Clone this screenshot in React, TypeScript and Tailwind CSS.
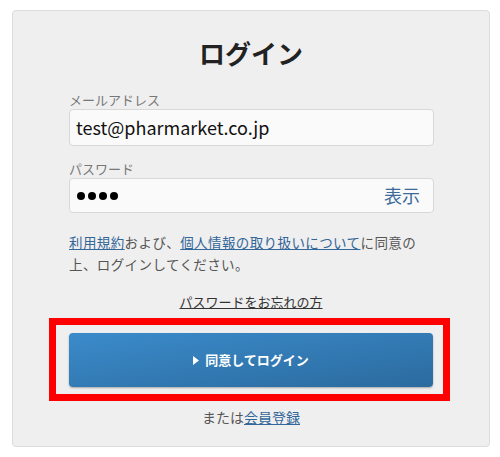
export default function App() {
  return (
    <div className="w-[500px] h-[457px] bg-white pt-[10px] pl-[12px] font-['Noto_Sans_CJK_JP',sans-serif]">
      <div className="w-[478px] h-[437px] bg-[#efefef] border border-[#dcdcdc] rounded-[4px] flex flex-col">
        {/* Title */}
        <h1 className="mt-[25px] text-center text-[26px] leading-[34px] font-bold text-[#222]">ログイン</h1>

        <div className="mt-[22px] pl-[56px] w-[421px]">
          <div className="text-[13px] leading-[16px] text-[#777]">メールアドレス</div>
          <div className="mt-[1px] h-[37px] bg-[#fafafa] border border-[#d8d8d8] rounded-[4px] flex items-center px-[6px] text-[18px] text-[#111]">
            test@pharmarket.co.jp
          </div>

          <div className="mt-[15px] text-[13px] leading-[16px] text-[#777]">パスワード</div>
          <div className="mt-[1px] h-[35px] bg-[#fafafa] border border-[#d8d8d8] rounded-[4px] flex items-center justify-between pl-[7px] pr-[13px]">
            <span className="flex gap-[3px]">
              <span className="w-[8px] h-[8px] rounded-full bg-black" />
              <span className="w-[8px] h-[8px] rounded-full bg-black" />
              <span className="w-[8px] h-[8px] rounded-full bg-black" />
              <span className="w-[8px] h-[8px] rounded-full bg-black" />
            </span>
            <span className="text-[18px] text-[#3c6a9b]">表示</span>
          </div>

          <p className="mt-[18px] text-[13.5px] tracking-[0.4px] leading-[22px] text-[#555]">
            <a className="underline text-[#336699]">利用規約</a>および、<a className="underline text-[#336699]">個人情報の取り扱いについて</a>に同意の
            <br />
            上、ログインしてください。
          </p>
        </div>

        <div className="mt-[18px] text-center text-[13px] leading-[18px]">
          <a className="underline text-[#333]">パスワードをお忘れの方</a>
        </div>

        {/* Button with highlight frame */}
        <div className="mt-[7px] ml-[36px] w-[401px] border-[7px] border-[#ff0000] px-[13px] pt-[8px] pb-[7px]">
          <button className="w-[364px] h-[54px] rounded-[4px] bg-gradient-to-br from-[#3b8bcb] to-[#2b6b9f] shadow-[0_1px_2px_rgba(0,0,0,0.3)] text-white text-[13px] font-bold flex items-center justify-center gap-[6px]">
            <svg width="6" height="9" viewBox="0 0 6 9">
              <path d="M0 0L6 4.5L0 9Z" fill="white" />
            </svg>
            同意してログイン
          </button>
        </div>

        <div className="mt-[6px] text-center text-[14px] leading-[20px] text-[#555]">
          または<a className="underline text-[#336699]">会員登録</a>
        </div>
      </div>
    </div>
  );
}
